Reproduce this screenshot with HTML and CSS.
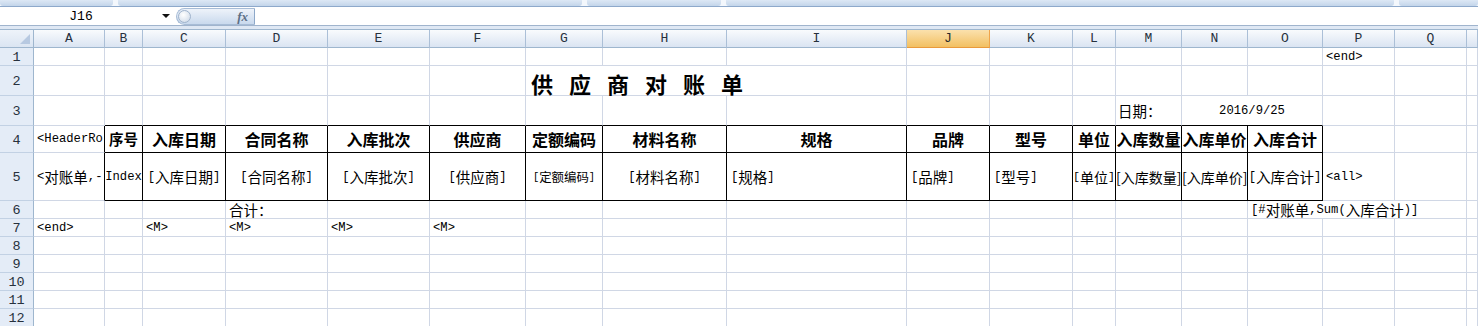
FILE: index.html
```html
<!DOCTYPE html>
<html lang="zh-CN">
<head>
    <meta charset="UTF-8">
    <title>供应商对账单</title>
    <link rel="stylesheet" href="styles.css">
</head>
<body>
    <div class="ribbon-edge">
        <span class="grp g1"></span><span class="grp g2"></span><span class="grp g3"></span><span class="grp g4"></span><span class="grp g5"></span>
    </div>
    <div class="formula-bar">
        <div class="name-box"><span class="name">J16</span><span class="dd"></span></div>
        <div class="fx-btn"><span class="knob"></span><span class="fx">fx</span></div>
        <div class="formula-input"></div>
    </div>
    <div class="gap"></div>

    <div class="sheet">
        <!-- column headers -->
        <div class="corner"><span class="tri"></span></div>
        <div class="ch">A</div><div class="ch">B</div><div class="ch">C</div><div class="ch">D</div><div class="ch">E</div><div class="ch">F</div><div class="ch">G</div><div class="ch">H</div><div class="ch">I</div><div class="ch sel">J</div><div class="ch">K</div><div class="ch">L</div><div class="ch">M</div><div class="ch">N</div><div class="ch">O</div><div class="ch">P</div><div class="ch">Q</div><div class="ch"></div>

        <!-- row 1 -->
        <div class="rh">1</div>
        <div class="c"></div><div class="c"></div><div class="c"></div><div class="c"></div><div class="c"></div><div class="c"></div><div class="c"></div><div class="c"></div><div class="c"></div><div class="c"></div><div class="c"></div><div class="c"></div><div class="c"></div><div class="c"></div><div class="c"></div>
        <div class="c"><span class="en">&lt;end&gt;</span></div><div class="c"></div><div class="c"></div>

        <!-- row 2: title -->
        <div class="rh">2</div>
        <div class="c"></div><div class="c"></div><div class="c"></div><div class="c"></div><div class="c"></div><div class="c"></div>
        <div class="c span3 title">供应商对账单</div>
        <div class="c"></div><div class="c"></div><div class="c"></div><div class="c"></div><div class="c"></div><div class="c"></div><div class="c"></div><div class="c"></div><div class="c"></div>

        <!-- row 3: date -->
        <div class="rh">3</div>
        <div class="c"></div>
        <div class="c tt"></div><div class="c tt"></div><div class="c tt"></div><div class="c tt"></div><div class="c tt"></div><div class="c tt"></div><div class="c tt"></div><div class="c tt"></div><div class="c tt"></div><div class="c tt"></div><div class="c tt"></div>
        <div class="c tt date-label">日期：</div>
        <div class="c tt span2 mid"><span class="en">2016/9/25</span></div>
        <div class="c"></div><div class="c"></div><div class="c"></div>

        <!-- row 4: table header -->
        <div class="rh">4</div>
        <div class="c tl clip"><span class="en">&lt;HeaderRo</span></div>
        <div class="c t th clip narrow">序号</div>
        <div class="c t th">入库日期</div>
        <div class="c t th">合同名称</div>
        <div class="c t th">入库批次</div>
        <div class="c t th">供应商</div>
        <div class="c t th">定额编码</div>
        <div class="c t th">材料名称</div>
        <div class="c t th">规格</div>
        <div class="c t th">品牌</div>
        <div class="c t th">型号</div>
        <div class="c t th">单位</div>
        <div class="c t th clip">入库数量</div>
        <div class="c t th clip">入库单价</div>
        <div class="c t th">入库合计</div>
        <div class="c"></div><div class="c"></div><div class="c"></div>

        <!-- row 5: template fields -->
        <div class="rh">5</div>
        <div class="c tl clip"><span class="en">&lt;</span>对账单<span class="en">,-</span></div>
        <div class="c t mid clip"><span class="en">Index</span></div>
        <div class="c t mid"><span class="en">[</span>入库日期<span class="en">]</span></div>
        <div class="c t mid"><span class="en">[</span>合同名称<span class="en">]</span></div>
        <div class="c t mid"><span class="en">[</span>入库批次<span class="en">]</span></div>
        <div class="c t mid"><span class="en">[</span>供应商<span class="en">]</span></div>
        <div class="c t mid sm"><span class="en">[</span>定额编码<span class="en">]</span></div>
        <div class="c t mid"><span class="en">[</span>材料名称<span class="en">]</span></div>
        <div class="c t ind"><span class="en">[</span>规格<span class="en">]</span></div>
        <div class="c t ind"><span class="en">[</span>品牌<span class="en">]</span></div>
        <div class="c t ind"><span class="en">[</span>型号<span class="en">]</span></div>
        <div class="c t mid tight"><span class="en">[</span>单位<span class="en">]</span></div>
        <div class="c t tight clip">[入库数量]</div>
        <div class="c t tight clip">[入库单价]</div>
        <div class="c t mid clip"><span class="en">[</span>入库合计<span class="en">]</span></div>
        <div class="c"><span class="en">&lt;all&gt;</span></div><div class="c"></div><div class="c"></div>

        <!-- row 6: total -->
        <div class="rh">6</div>
        <div class="c"></div><div class="c"></div><div class="c"></div>
        <div class="c">合计：</div>
        <div class="c"></div><div class="c"></div><div class="c"></div><div class="c"></div><div class="c"></div><div class="c"></div><div class="c"></div><div class="c"></div><div class="c"></div><div class="c"></div>
        <div class="c span3"><span class="en">[#</span>对账单<span class="en">,Sum(</span>入库合计<span class="en">)]</span></div>
        <div class="c"></div>

        <!-- row 7 -->
        <div class="rh">7</div>
        <div class="c"><span class="en">&lt;end&gt;</span></div>
        <div class="c"></div>
        <div class="c"><span class="en">&lt;M&gt;</span></div>
        <div class="c"><span class="en">&lt;M&gt;</span></div>
        <div class="c"><span class="en">&lt;M&gt;</span></div>
        <div class="c"><span class="en">&lt;M&gt;</span></div>
        <div class="c"></div><div class="c"></div><div class="c"></div><div class="c"></div><div class="c"></div><div class="c"></div><div class="c"></div><div class="c"></div><div class="c"></div><div class="c"></div><div class="c"></div><div class="c"></div>

        <!-- rows 8 - 12 -->
        <div class="rh">8</div>
        <div class="c"></div><div class="c"></div><div class="c"></div><div class="c"></div><div class="c"></div><div class="c"></div><div class="c"></div><div class="c"></div><div class="c"></div><div class="c"></div><div class="c"></div><div class="c"></div><div class="c"></div><div class="c"></div><div class="c"></div><div class="c"></div><div class="c"></div><div class="c"></div>
        <div class="rh">9</div>
        <div class="c"></div><div class="c"></div><div class="c"></div><div class="c"></div><div class="c"></div><div class="c"></div><div class="c"></div><div class="c"></div><div class="c"></div><div class="c"></div><div class="c"></div><div class="c"></div><div class="c"></div><div class="c"></div><div class="c"></div><div class="c"></div><div class="c"></div><div class="c"></div>
        <div class="rh">10</div>
        <div class="c"></div><div class="c"></div><div class="c"></div><div class="c"></div><div class="c"></div><div class="c"></div><div class="c"></div><div class="c"></div><div class="c"></div><div class="c"></div><div class="c"></div><div class="c"></div><div class="c"></div><div class="c"></div><div class="c"></div><div class="c"></div><div class="c"></div><div class="c"></div>
        <div class="rh">11</div>
        <div class="c"></div><div class="c"></div><div class="c"></div><div class="c"></div><div class="c"></div><div class="c"></div><div class="c"></div><div class="c"></div><div class="c"></div><div class="c"></div><div class="c"></div><div class="c"></div><div class="c"></div><div class="c"></div><div class="c"></div><div class="c"></div><div class="c"></div><div class="c"></div>
        <div class="rh">12</div>
        <div class="c"></div><div class="c"></div><div class="c"></div><div class="c"></div><div class="c"></div><div class="c"></div><div class="c"></div><div class="c"></div><div class="c"></div><div class="c"></div><div class="c"></div><div class="c"></div><div class="c"></div><div class="c"></div><div class="c"></div><div class="c"></div><div class="c"></div><div class="c"></div>
    </div>
</body>
</html>
```

FILE: styles.css
```css
* {
    box-sizing: border-box;
}
body {
    margin: 0;
    width: 1478px;
    height: 326px;
    overflow: hidden;
    background: #fff;
    font-family: "Noto Sans CJK SC", sans-serif;
    color: #000;
}

/* top edge of the ribbon */
.ribbon-edge {
    display: flex;
    gap: 5px;
    height: 7px;
    background: #f3f7fc;
    border-bottom: 1px solid #8ea9cb;
}
.grp {
    height: 6px;
    background: linear-gradient(#dde8f5, #c3d5ea);
    border-radius: 0 0 3px 3px;
}
.g1 { width: 113px; }
.g2 { width: 464px; }
.g3 { width: 134px; }
.g4 { width: 668px; }
.g5 { flex: 1; }

/* formula bar */
.formula-bar {
    display: flex;
    height: 19px;
    border-bottom: 1px solid #a0b4cd;
    background: #fff;
}
.name-box {
    display: flex;
    align-items: center;
    width: 176px;
}
.name {
    width: 162px;
    text-align: center;
    font-family: "Liberation Mono", monospace;
    font-size: 13px;
}
.dd {
    width: 0;
    height: 0;
    border-left: 4px solid transparent;
    border-right: 4px solid transparent;
    border-top: 4px solid #111;
}
.fx-btn {
    display: flex;
    align-items: center;
    width: 79px;
    margin-top: 1px;
    height: 17px;
    background: linear-gradient(#eef3fa, #c9d9ed);
    border: 1px solid #a7bcd6;
    border-right-color: #8da8c9;
    border-radius: 9px 0 0 9px;
}
.knob {
    width: 13px;
    height: 13px;
    margin-left: 1px;
    border-radius: 50%;
    border: 1px solid #9fb3cc;
    background: radial-gradient(circle at 40% 35%, #fff, #c9d6e6);
}
.fx {
    margin-left: auto;
    margin-right: 6px;
    font-family: "Liberation Serif", serif;
    font-style: italic;
    font-weight: bold;
    font-size: 13px;
    color: #5d6f86;
}
.formula-input {
    flex: 1;
}
.gap {
    height: 4px;
    background: #dfe8f4;
    border-bottom: 1px solid #9eb6ce;
}

/* worksheet grid */
.sheet {
    display: grid;
    grid-template-columns: 34px 71px 38px 83px 102px 102px 96px 77px 124px 180px 83px 83px 43px 66px 66px 75px 72px 72px 11px;
    grid-template-rows: 18px 18px 30px 30px 27px 48px repeat(7, 18px);
}
.corner {
    display: flex;
    align-items: flex-end;
    justify-content: flex-end;
    padding: 0 3px 3px 0;
    background: linear-gradient(#eef3fa, #dbe5f2);
    border-right: 1px solid #9eb6ce;
    border-bottom: 1px solid #9eb6ce;
}
.tri {
    width: 0;
    height: 0;
    border-left: 10px solid transparent;
    border-bottom: 10px solid #b7c9e1;
}
.ch {
    display: flex;
    align-items: center;
    justify-content: center;
    background: linear-gradient(#f9fbfd, #dae4f2);
    border-right: 1px solid #abbfd7;
    border-bottom: 1px solid #9eb6ce;
    font-family: "Liberation Mono", monospace;
    font-size: 13px;
    color: #27313d;
}
.ch.sel {
    background: linear-gradient(#fbe1ad, #f2c062);
    border-right-color: #f0a44a;
    border-bottom-color: #e99a3c;
    color: #2a2a2a;
}
.rh {
    display: flex;
    align-items: center;
    justify-content: center;
    padding-top: 2px;
    background: #e4ecf7;
    border-right: 1px solid #9eb6ce;
    border-bottom: 1px solid #c2d1e4;
    font-family: "Liberation Mono", monospace;
    font-size: 13.5px;
    color: #27313d;
}
.c {
    display: flex;
    align-items: center;
    min-width: 0;
    padding: 0 3px;
    border-right: 1px solid #d0d7e5;
    border-bottom: 1px solid #d0d7e5;
    font-size: 14.5px;
    line-height: 16px;
    white-space: nowrap;
}
.en {
    font-family: "Liberation Mono", monospace;
    font-size: 12.2px;
}
.span2 { grid-column: span 2; }
.span3 { grid-column: span 3; }
.mid { justify-content: center; }
.ind { padding-left: 4px; }
.clip { overflow: hidden; }
.sm { font-size: 12.4px; }
.sm .en { font-size: 10.4px; }
.tight {
    padding: 0;
    font-size: 14px;
}
.tight .en { font-size: 11.6px; }

.title {
    padding: 4px 0 0 5px;
    font-size: 22px;
    font-weight: 700;
    letter-spacing: 16px;
}
.date-label {
    padding-left: 2px;
}

/* bordered table B3:O5 */
.tt { border-bottom-color: #000; }
.tl { border-right-color: #000; }
.t {
    border-right-color: #000;
    border-bottom-color: #000;
}
.th {
    justify-content: center;
    font-size: 16px;
    font-weight: 700;
}
.th.narrow {
    padding: 0;
    font-size: 14.5px;
}
```
